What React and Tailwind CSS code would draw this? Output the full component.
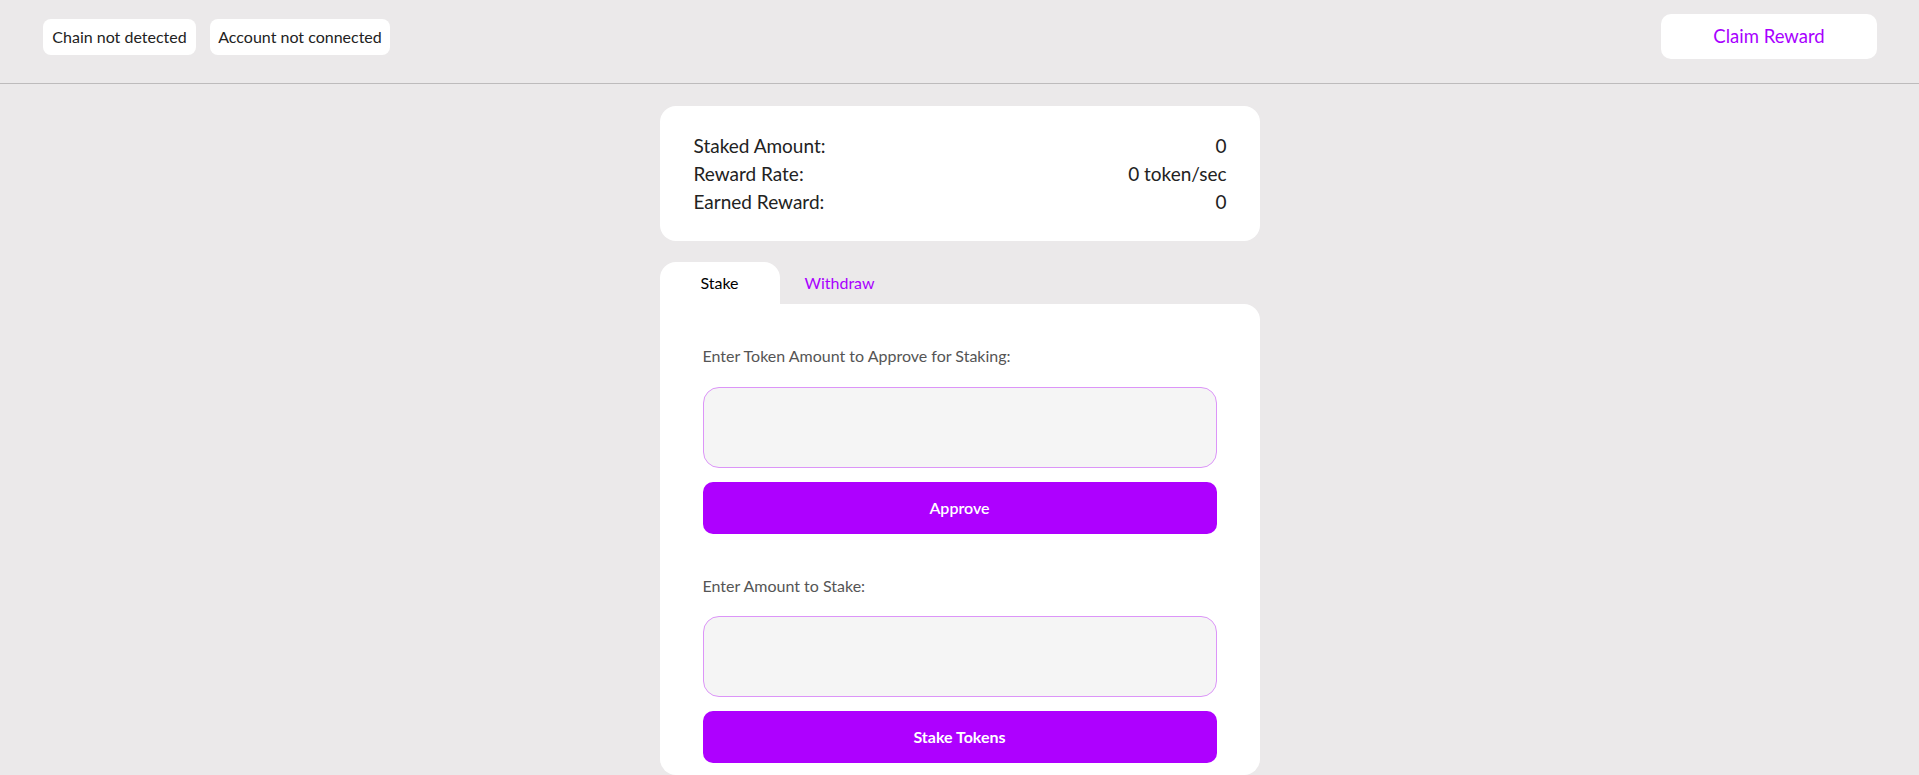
import { useState } from "react";

const StatRow = ({ label, value }) => (
  <div className="flex justify-between leading-[28px]">
    <span>{label}</span>
    <span>{value}</span>
  </div>
);

const App = () => {
  const [tab, setTab] = useState("stake");
  const [approveAmount, setApproveAmount] = useState("");
  const [stakeAmount, setStakeAmount] = useState("");

  return (
    <div className="min-h-screen bg-[#ebe9ea] font-['Lato',sans-serif] text-[#222]">
      {/* Header */}
      <header className="flex items-center justify-between pl-[43px] pr-[42px] pt-[14px] pb-[24px] border-b border-[#bdbbbc]">
        <div className="flex items-center gap-[14px]">
          <span className="bg-white rounded-lg h-[36px] w-[153px] flex items-center justify-center text-[16px]">
            Chain not detected
          </span>
          <span className="bg-white rounded-lg h-[36px] w-[180px] flex items-center justify-center text-[16px]">
            Account not connected
          </span>
        </div>
        <button className="bg-white rounded-[10px] w-[216px] h-[45px] text-[18.5px] text-[#a800ff]">
          Claim Reward
        </button>
      </header>

      <main className="w-[600px] mx-auto pt-[22px]">
        {/* Stats */}
        <div className="bg-white rounded-2xl pl-[34px] pr-[33px] pt-[26px] pb-[25px] text-[19px]">
          <StatRow label="Staked Amount:" value="0" />
          <StatRow label="Reward Rate:" value="0 token/sec" />
          <StatRow label="Earned Reward:" value="0" />
        </div>

        {/* Tabs */}
        <div className="flex mt-[21px] text-[16px]">
          <button
            onClick={() => setTab("stake")}
            className={`w-[120px] h-[42px] rounded-t-2xl ${tab === "stake" ? "bg-white text-black" : "text-[#a800ff]"}`}
          >
            Stake
          </button>
          <button
            onClick={() => setTab("withdraw")}
            className={`w-[120px] h-[42px] rounded-t-2xl ${tab === "withdraw" ? "bg-white text-black" : "text-[#a800ff]"}`}
          >
            Withdraw
          </button>
        </div>

        <div className={`bg-white rounded-b-2xl ${tab === "stake" ? "rounded-tr-2xl" : "rounded-t-2xl"} px-[43px] pt-[42px] pb-[12px]`}>
          <div>
            <p className="text-[16px] leading-[20px] text-[#555]">
              {tab === "stake" ? "Enter Token Amount to Approve for Staking:" : "Enter Amount to Withdraw:"}
            </p>
            <input
              value={approveAmount}
              onChange={(e) => setApproveAmount(e.target.value)}
              className="mt-[21px] w-full h-[81px] bg-[#f5f5f5] border border-[#dc95f8] rounded-2xl px-4 outline-none"
            />
            <button className="mt-[14px] w-full h-[52px] rounded-[10px] bg-[#ae00ff] text-white text-[16px] font-semibold">
              {tab === "stake" ? "Approve" : "Withdraw"}
            </button>
          </div>

          {tab === "stake" && (
            <div className="mt-[42px]">
              <p className="text-[16px] leading-[20px] text-[#555]">Enter Amount to Stake:</p>
              <input
                value={stakeAmount}
                onChange={(e) => setStakeAmount(e.target.value)}
                className="mt-[20px] w-full h-[81px] bg-[#f5f5f5] border border-[#dc95f8] rounded-2xl px-4 outline-none"
              />
              <button className="mt-[14px] w-full h-[52px] rounded-[10px] bg-[#ae00ff] text-white text-[16px] font-bold">
                Stake Tokens
              </button>
            </div>
          )}
        </div>
      </main>
    </div>
  );
};

export default App;
